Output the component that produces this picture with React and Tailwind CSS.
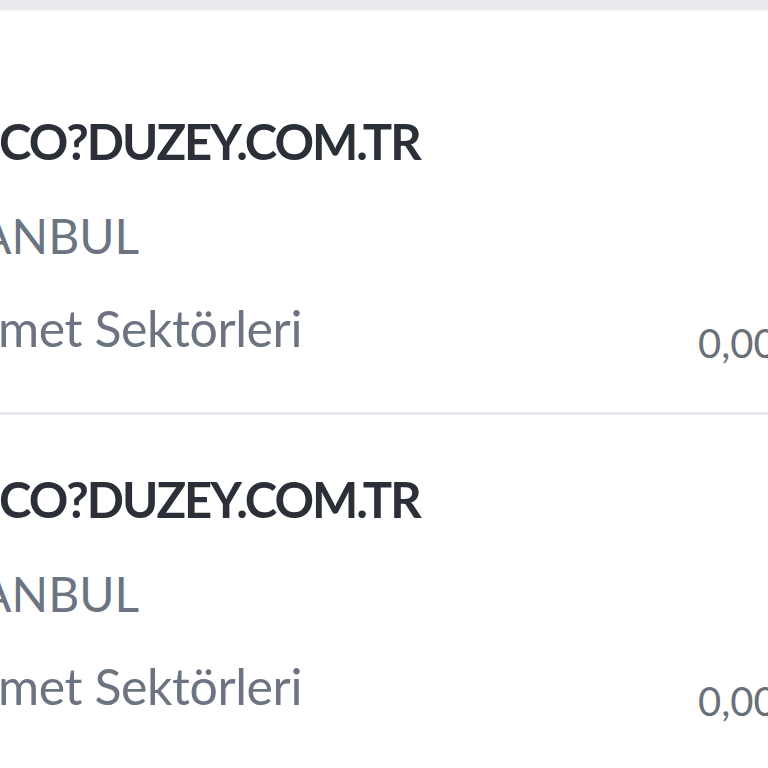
import React from "react";

const items = [
  { name: "CO?DUZEY.COM.TR", city: "ANBUL", sector: "met Sektörleri", amount: "0,00 TL" },
  { name: "CO?DUZEY.COM.TR", city: "ANBUL", sector: "met Sektörleri", amount: "0,00 TL" },
];

const Row = ({ item }) => (
  <div className="pt-[59px] pb-[49px] first:pt-[106px] border-b-[3px] border-[#e6eaee] last:border-b-0">
    <div className="text-[49px] leading-[50px] font-bold tracking-[-2px] text-[#2b3038] whitespace-nowrap -ml-[1px]">
      {item.name}
    </div>
    <div className="mt-[45px] text-[48px] leading-[50px] text-[#6b7480] whitespace-nowrap -ml-[21px]">
      {item.city}
    </div>
    <div className="mt-[42px] flex items-start justify-between">
      <span className="text-[50px] leading-[50px] tracking-[-0.4px] text-[#6b7480] whitespace-nowrap -ml-[2px]">
        {item.sector}
      </span>
      <span className="w-[70px] mt-[20px] text-[40px] leading-[40px] text-[#6b7078] whitespace-nowrap">
        {item.amount}
      </span>
    </div>
  </div>
);

export default function App() {
  return (
    <div className="w-[768px] h-[768px] overflow-hidden bg-white font-['Lato',sans-serif]">
      <div className="h-[10px] bg-[#ebebef]" />
      <div className="h-[2px] bg-gradient-to-b from-[#f1f2f6] to-white" />
      <div className="-mt-[2px]">
        {items.map((item, i) => (
          <Row key={i} item={item} />
        ))}
      </div>
    </div>
  );
}
